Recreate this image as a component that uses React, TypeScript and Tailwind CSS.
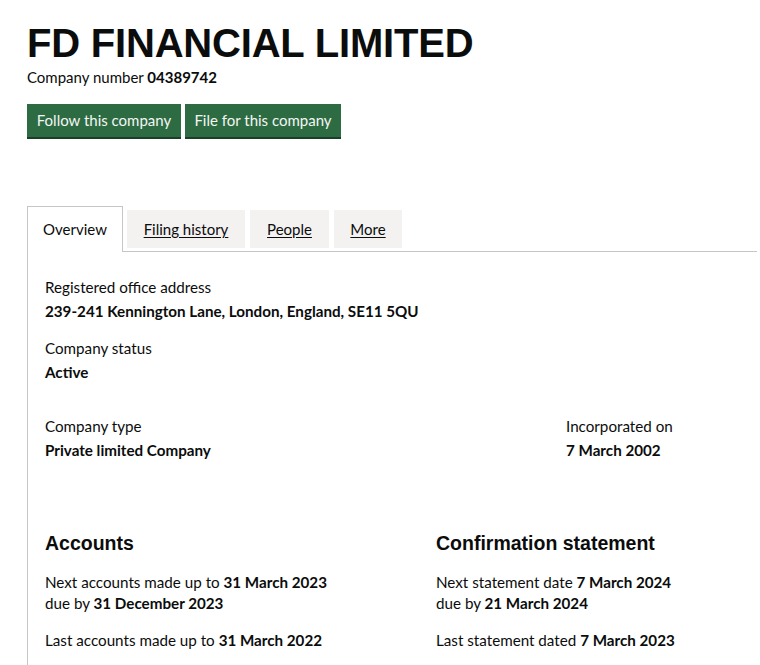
const body = { fontFamily: "Lato, 'Noto Sans', sans-serif" };
const head = { fontFamily: "'Liberation Sans', Arial, sans-serif" };

function Field({ label, value }: { label: string; value: string }) {
  return (
    <div>
      <p className="text-[15.2px] leading-[24px]">{label}</p>
      <p className="text-[15.2px] leading-[24px] font-bold">{value}</p>
    </div>
  );
}

export default function App() {
  const tabs = ["Filing history", "People", "More"];
  return (
    <div className="min-h-[665px] bg-white text-[#0b0c0c] pl-[27px] pt-[21px]" style={body}>
      <h1 className="text-[40px] leading-[44px] font-bold tracking-[-0.2px]" style={head}>
        FD FINANCIAL LIMITED
      </h1>
      <p className="text-[15px] leading-[22px] mt-[1px]">
        Company number <span className="font-bold">04389742</span>
      </p>
      <div className="flex gap-[4px] mt-[16px]">
        <button className="h-[33px] w-[154px] bg-[#2d6b43] text-[15px] text-[#f3f6f3] shadow-[0_2px_0_#1c3d27] pb-[1px]">
          Follow this company
        </button>
        <button className="h-[33px] w-[156px] bg-[#2d6b43] text-[15px] text-[#f3f6f3] shadow-[0_2px_0_#1c3d27] pb-[1px]">
          File for this company
        </button>
      </div>

      <div className="mt-[69px] w-[730px]">
        <div className="flex items-end">
          <div className="h-[46px] w-[96px] border border-b-0 border-[#c4c6c8] flex items-center justify-center text-[15px] pb-[1px] bg-white">
            Overview
          </div>
          <div className="flex flex-1 items-end border-b border-[#c4c6c8] h-[46px]">
            <div className="flex gap-[5px] ml-[4px] mb-[3px]">
              {tabs.map((t) => (
                <div
                  key={t}
                  className={`h-[38px] bg-[#f3f2f1] flex items-center justify-center text-[15px] underline underline-offset-2 ${
                    t === "Filing history" ? "w-[118px]" : t === "People" ? "w-[79px]" : "w-[68px]"
                  }`}
                >
                  {t}
                </div>
              ))}
            </div>
          </div>
        </div>

        <div className="border-l border-[#c4c6c8] pl-[17px] pt-[23px] pb-[40px]">
          <Field label="Registered office address" value="239-241 Kennington Lane, London, England, SE11 5QU" />
          <div className="mt-[13px]">
            <Field label="Company status" value="Active" />
          </div>
          <div className="mt-[30px] flex">
            <div className="w-[521px]">
              <Field label="Company type" value="Private limited Company" />
            </div>
            <Field label="Incorporated on" value="7 March 2002" />
          </div>

          <div className="mt-[68px] flex">
            <div className="w-[391px]">
              <h2 className="text-[19.5px] leading-[26px] font-bold" style={head}>Accounts</h2>
              <p className="mt-[16px] text-[15.2px] leading-[21px]">
                Next accounts made up to <span className="font-bold">31 March 2023</span>
                <br />
                due by <span className="font-bold">31 December 2023</span>
              </p>
              <p className="mt-[16px] text-[15.2px] leading-[21px]">
                Last accounts made up to <span className="font-bold">31 March 2022</span>
              </p>
            </div>
            <div>
              <h2 className="text-[19.5px] leading-[26px] font-bold" style={head}>Confirmation statement</h2>
              <p className="mt-[16px] text-[15.2px] leading-[21px]">
                Next statement date <span className="font-bold">7 March 2024</span>
                <br />
                due by <span className="font-bold">21 March 2024</span>
              </p>
              <p className="mt-[16px] text-[15.2px] leading-[21px]">
                Last statement dated <span className="font-bold">7 March 2023</span>
              </p>
            </div>
          </div>
        </div>
      </div>
    </div>
  );
}
